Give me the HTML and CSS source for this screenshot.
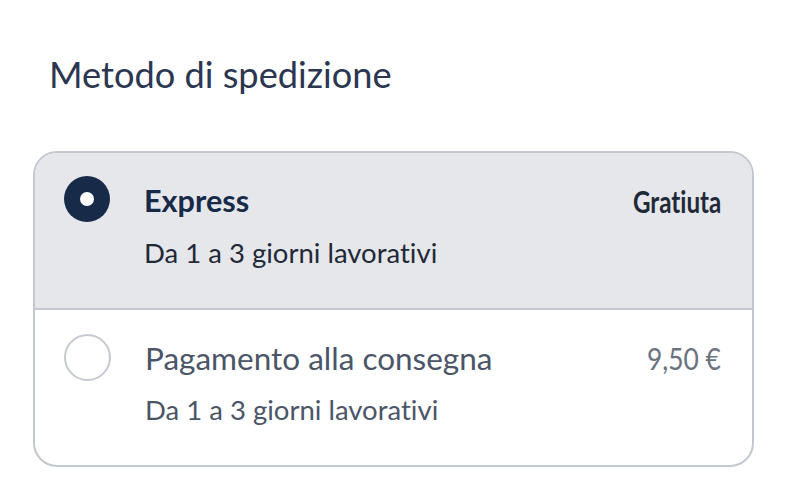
FILE: index.html
```html
<!DOCTYPE html>
<html lang="it">
<head>
<meta charset="utf-8">
<title>Metodo di spedizione</title>
<link rel="stylesheet" href="styles.css">
</head>
<body>
<main class="page">
  <h2 class="title">Metodo di spedizione</h2>
  <div class="card">
    <label class="option option--selected">
      <span class="radio radio--on"><span class="radio-dot"></span></span>
      <span class="info">
        <span class="name">Express</span>
        <span class="desc">Da 1 a 3 giorni lavorativi</span>
      </span>
      <span class="price price--strong"><span class="price-text">Gratiuta</span></span>
    </label>
    <label class="option">
      <span class="radio"></span>
      <span class="info">
        <span class="name name--muted">Pagamento alla consegna</span>
        <span class="desc desc--muted">Da 1 a 3 giorni lavorativi</span>
      </span>
      <span class="price"><span class="price-text">9,50 €</span></span>
    </label>
  </div>
</main>
</body>
</html>
```
FILE: styles.css
```css
html, body {
  margin: 0;
  padding: 0;
  background: #ffffff;
}
body {
  font-family: "Lato", "Noto Sans", sans-serif;
  font-variant-ligatures: none;
  color: #1f2937;
}
.page {
  padding: 52px 32px 0 33px;
}
.title {
  margin: 0 0 55px 16px;
  font-size: 36.2px;
  font-weight: 400;
  line-height: 44px;
  color: #2b3651;
}
.card {
  box-sizing: border-box;
  width: 721px;
  border: 2px solid #c3c7cf;
  border-radius: 24px;
  overflow: hidden;
}
.option {
  box-sizing: border-box;
  display: flex;
  align-items: flex-start;
  gap: 34px;
  padding: 23px 31px 0 29px;
  height: 155px;
}
.option + .option {
  border-top: 2px solid #c3c7cf;
  height: 157px;
}
.option--selected {
  background: #e6e7eb;
}
.radio {
  box-sizing: border-box;
  flex: none;
  width: 47px;
  height: 47px;
  margin-top: 1px;
  border: 2px solid #c5c9d1;
  border-radius: 50%;
  background: #ffffff;
  display: flex;
  align-items: center;
  justify-content: center;
}
.radio--on {
  width: 46px;
  height: 46px;
  margin-top: 0;
  border: 0;
  background: #172a48;
}
.radio-dot {
  width: 14px;
  height: 14px;
  border-radius: 50%;
  background: #ffffff;
}
.info {
  flex: 1;
  display: flex;
  flex-direction: column;
  padding-top: 6px;
}
.name {
  font-size: 31.5px;
  line-height: 38px;
  font-weight: 400;
  color: #4b5568;
}
.option--selected .name {
  font-size: 30.6px;
  font-weight: 700;
  color: #172a48;
}
.desc {
  font-size: 27.5px;
  line-height: 34px;
  margin-top: 16px;
  color: #4b5568;
}
.option--selected .desc {
  color: #1f2937;
}
.price {
  font-size: 31px;
  line-height: 38px;
  padding-top: 6px;
  color: #6b7280;
}
.price-text {
  display: inline-block;
  transform: scaleX(0.85);
  transform-origin: right center;
}
.price--strong {
  color: #1f2937;
  font-weight: 700;
}
.price--strong .price-text {
  transform: scaleX(0.78);
}
```
